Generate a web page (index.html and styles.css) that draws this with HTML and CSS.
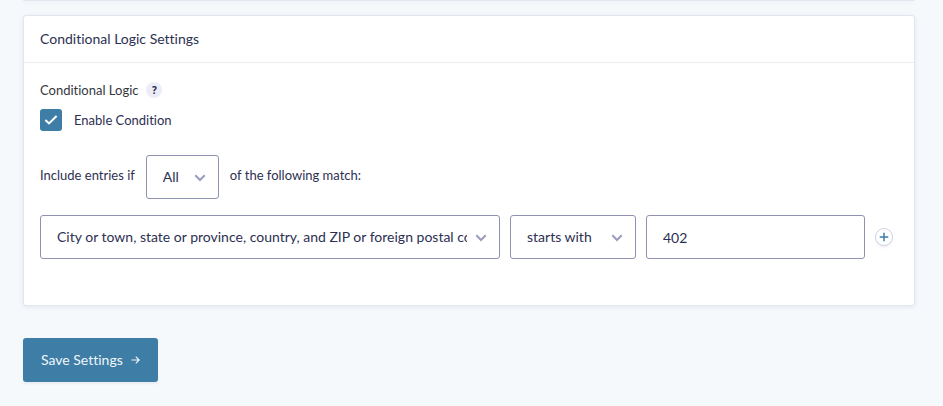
FILE: index.html
```html
<!DOCTYPE html>
<html lang="en">
<head>
<meta charset="utf-8">
<title>Conditional Logic Settings</title>
<link rel="stylesheet" href="styles.css">
</head>
<body>
<main class="page">
  <div class="panel panel-previous"></div>
  <form class="settings">
    <section class="panel">
      <header class="panel-header"><h2 class="panel-title">Conditional Logic Settings</h2></header>
      <div class="panel-body">
        <div class="field-label">
          <span>Conditional Logic</span>
          <button type="button" class="help">?</button>
        </div>
        <div class="enable">
          <span class="check-wrap">
            <input type="checkbox" id="enable" class="check" checked>
            <svg class="check-mark" width="22" height="22" viewBox="0 0 22 22" aria-hidden="true"><path d="M5.4 11 9 14.4 16.6 7"/></svg>
          </span>
          <label for="enable">Enable Condition</label>
        </div>
        <div class="match">
          <label for="scope" class="match-text">Include entries if</label>
          <span class="select-wrap select-scope">
            <select id="scope" class="control"><option>All</option></select>
            <svg class="chevron" width="12" height="8" viewBox="0 0 12 8" aria-hidden="true"><path d="M1.3 1.3 6 6 10.7 1.3"/></svg>
          </span>
          <span class="match-text">of the following match:</span>
        </div>
        <div class="rule">
          <span class="select-wrap select-field">
            <select class="control" aria-label="Field"><option>City or town, state or province, country, and ZIP or foreign postal code</option></select>
            <svg class="chevron" width="12" height="8" viewBox="0 0 12 8" aria-hidden="true"><path d="M1.3 1.3 6 6 10.7 1.3"/></svg>
          </span>
          <span class="select-wrap select-operator">
            <select class="control" aria-label="Operator"><option>starts with</option></select>
            <svg class="chevron" width="12" height="8" viewBox="0 0 12 8" aria-hidden="true"><path d="M1.3 1.3 6 6 10.7 1.3"/></svg>
          </span>
          <input type="text" class="control value" aria-label="Value" value="402">
          <button type="button" class="add" aria-label="Add rule">
            <svg width="10" height="10" viewBox="0 0 10 10" aria-hidden="true"><path d="M5 .7V9.3M.7 5H9.3"/></svg>
          </button>
        </div>
      </div>
    </section>
    <button type="submit" class="save">
      <span>Save Settings</span>
      <svg width="9" height="8" viewBox="0 0 9 8" aria-hidden="true"><path d="M.5 4H8M4.8 .7 8.1 4 4.8 7.3"/></svg>
    </button>
  </form>
</main>
</body>
</html>
```
FILE: styles.css
```css
:root { --font: Lato, "Noto Sans", sans-serif; }

* {
  box-sizing: border-box;
  font-variant-ligatures: none;
}

body {
  margin: 0;
  background: #f5f9fc;
  color: #2d3052;
  font: 13px/20px var(--font);
}

.page { padding: 0 28px 24px 23px; }

.panel {
  background: #fff;
  border: 1px solid #e3e6ef;
  border-radius: 3px;
  box-shadow: 0 1px 4px rgba(18, 25, 97, 0.08);
}

.panel-previous {
  height: 1px;
  margin-bottom: 14px;
  border-width: 0 0 1px;
}

.panel-header {
  padding: 13px 16px;
  border-bottom: 1px solid #ebebf2;
}

.panel-title {
  margin: 0;
  font-size: 14px;
  font-weight: 400;
}

.panel-body { padding: 17px 16px 46px; }

.field-label {
  display: flex;
  align-items: center;
  gap: 8px;
  color: #35373e;
}

.help {
  width: 16px;
  height: 16px;
  padding: 0;
  border: 0;
  border-radius: 50%;
  background: #ecedf8;
  color: #242748;
  font: 700 10px/16px "Noto Sans", sans-serif;
}

.enable {
  display: flex;
  align-items: center;
  gap: 12px;
  margin-top: 9px;
}

.check-wrap {
  position: relative;
  display: flex;
}

.check {
  width: 22px;
  height: 22px;
  margin: 0;
  appearance: none;
  border-radius: 3px;
  background: #3e7da6;
}

.check-mark {
  position: absolute;
  inset: 0;
  pointer-events: none;
}

svg path {
  fill: none;
  stroke: currentColor;
}

.check-mark path {
  stroke: #fff;
  stroke-width: 2;
}

.match {
  display: flex;
  align-items: center;
  gap: 11px;
  margin-top: 24px;
}

.match-text { padding-bottom: 4px; }

.select-wrap {
  position: relative;
  display: flex;
}

.control {
  width: 100%;
  min-width: 0;
  height: 44px;
  margin: 0;
  padding: 0 16px;
  appearance: none;
  border: 1px solid #9092b2;
  border-radius: 3px;
  background: #fff;
  color: #2d3052;
  font: 14px/20px var(--font);
}

select.control {
  padding-right: 32px;
  text-overflow: clip;
}

.chevron {
  position: absolute;
  top: 19px;
  right: 13px;
  color: #9a9cbd;
  stroke-width: 2;
  pointer-events: none;
}

.select-scope { width: 73px; }

.rule {
  display: grid;
  grid-template-columns: 460fr 126fr 219fr 18px;
  align-items: center;
  gap: 10px;
  margin-top: 16px;
  padding-right: 5px;
}

.add {
  display: flex;
  align-items: center;
  justify-content: center;
  width: 18px;
  height: 18px;
  padding: 0;
  border: 1px solid #d0d1e4;
  border-radius: 50%;
  background: #fff;
  box-shadow: 0 2px 2px rgba(58, 58, 87, 0.06);
  color: #3e7da6;
  stroke-width: 1.5;
}

.save {
  display: flex;
  align-items: center;
  gap: 8px;
  height: 44px;
  margin-top: 32px;
  padding: 0 18px;
  border: 0;
  border-radius: 3px;
  background: #3e7da6;
  box-shadow: 0 2px 2px rgba(58, 58, 87, 0.06);
  color: #f0f6fa;
  font: 14px/20px var(--font);
  stroke-width: 1.2;
}
```
